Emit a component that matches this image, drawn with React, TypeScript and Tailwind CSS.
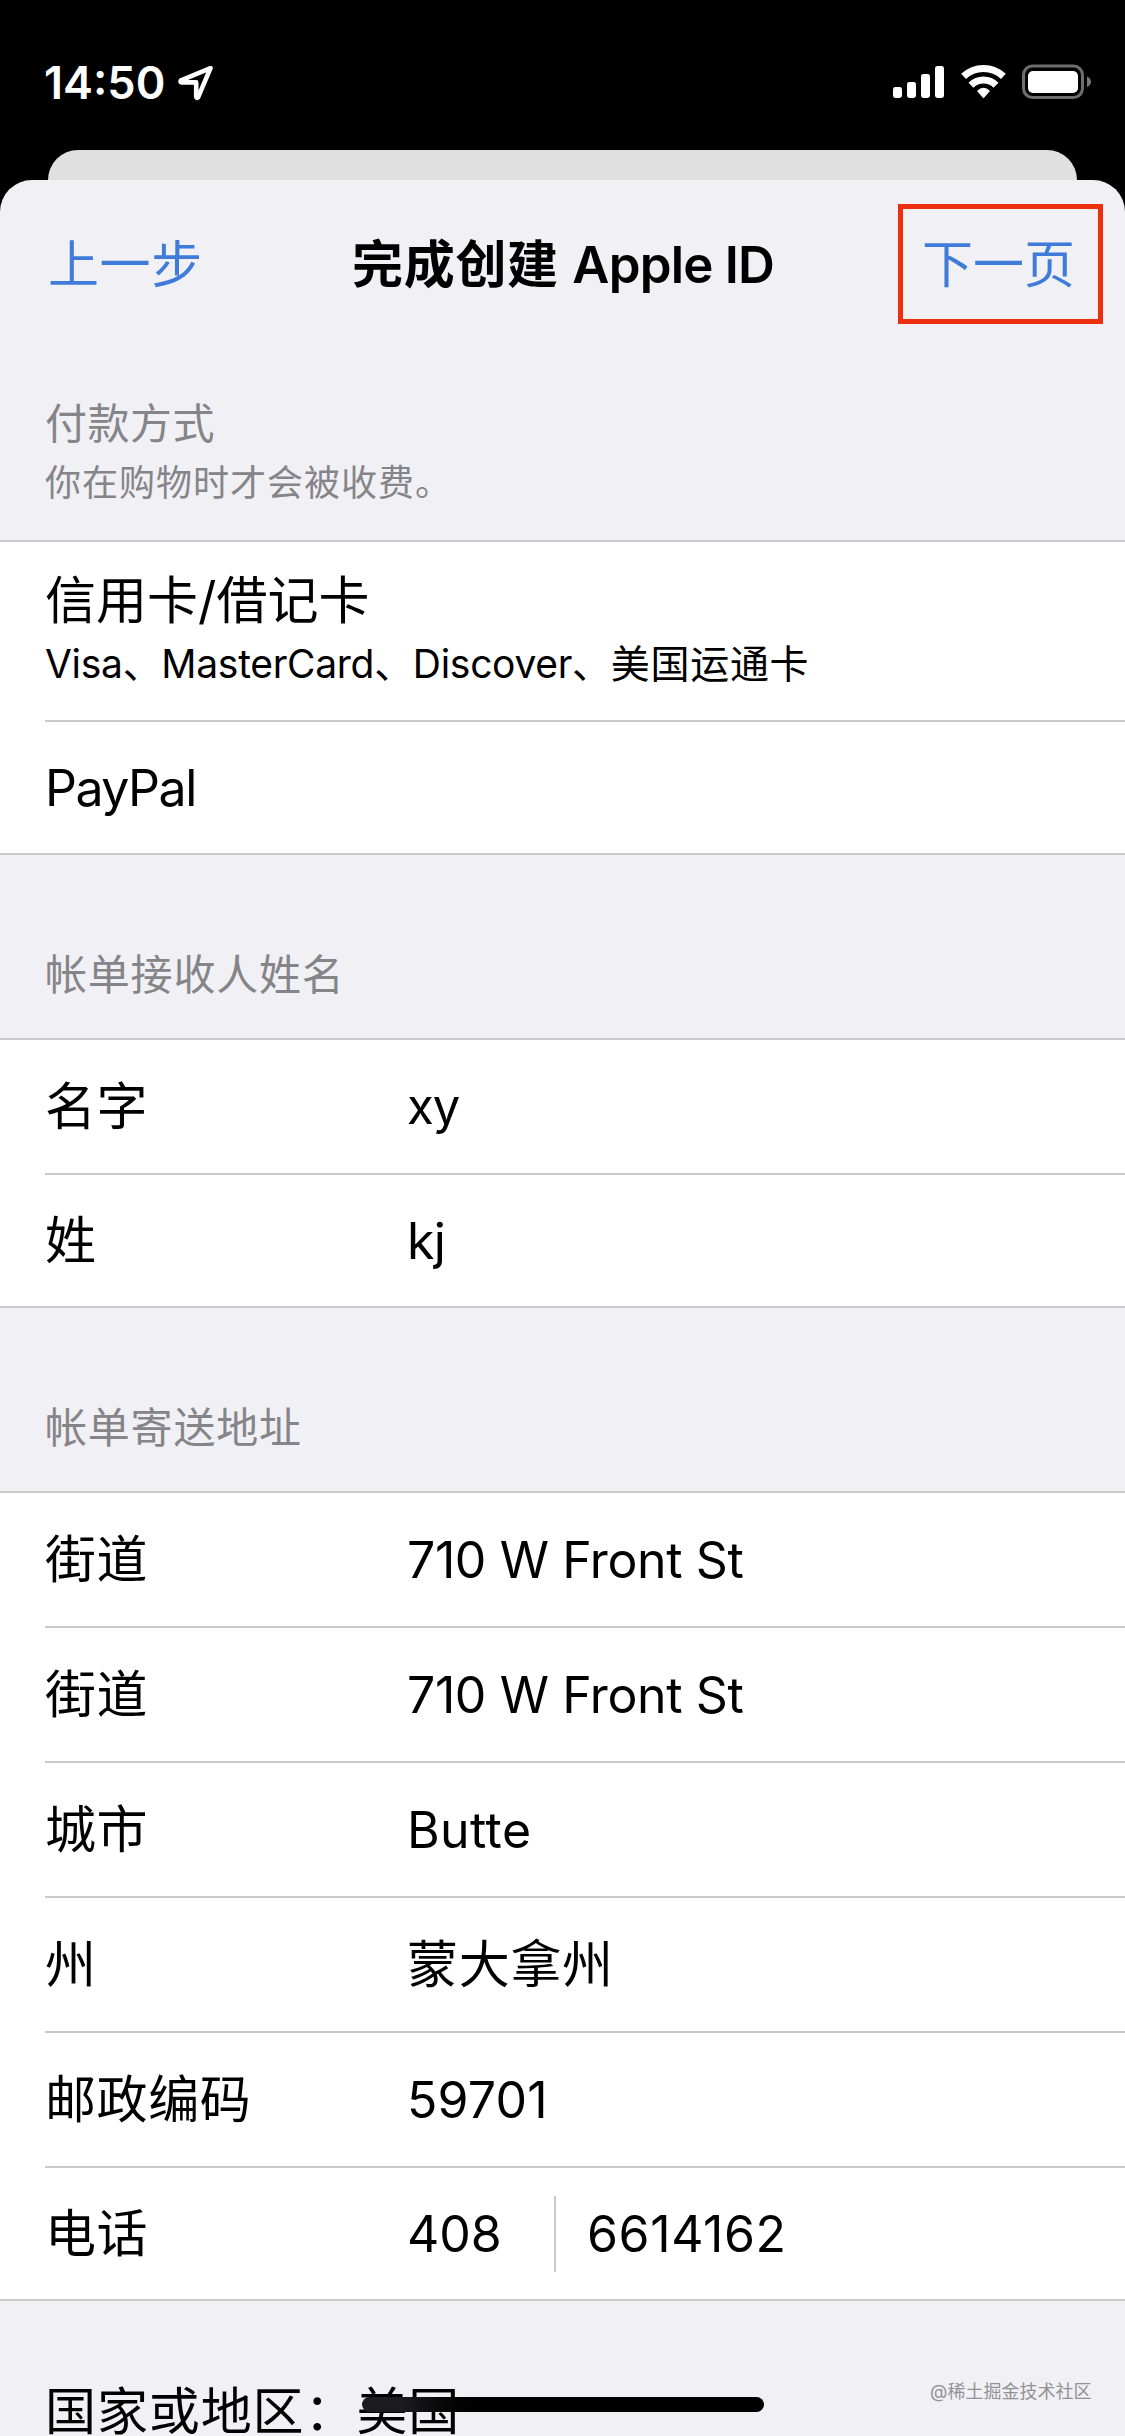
import type { ReactNode } from 'react'

type Field = { label: string; value: string; className: string }

const nameFields: Field[] = [
  { label: '名字', value: 'xy', className: 'text-[49px] tracking-[-1px]' },
  { label: '姓', value: 'kj', className: 'tracking-[-0.8px]' },
]

const addressFields: Field[] = [
  { label: '街道', value: '710 W Front St', className: 'tracking-[-0.4px]' },
  { label: '街道', value: '710 W Front St', className: 'tracking-[-0.4px]' },
  { label: '城市', value: 'Butte', className: 'tracking-[0.4px]' },
  { label: '州', value: '蒙大拿州', className: 'text-[51px] tracking-[0.7px]' },
  { label: '邮政编码', value: '59701', className: 'tracking-[0.2px]' },
]

function StatusBar() {
  return (
    <div className="h-[150px] flex items-start justify-between pl-[44px] pr-[33px] pt-[64px] text-white">
      <div className="flex items-start">
        <span className="w-[134px] pt-px text-[45px] leading-[36px] font-semibold whitespace-nowrap">14:50</span>
        <svg width="36" height="36" viewBox="0 0 36 36" fill="none" stroke="white" strokeWidth="4.6" strokeLinejoin="round" className="mt-px">
          <path d="M32.5 3.2 L3 15.4 Q1.8 17.2 3.6 17.4 H18.2 V32 Q19 33.6 20.2 32.2 Z" />
        </svg>
      </div>
      <div className="flex items-start">
        <svg width="51" height="36" viewBox="0 0 51 36" fill="white">
          <rect x="0" y="23" width="9" height="11" rx="2.4" />
          <rect x="14" y="18" width="9" height="16" rx="2.4" />
          <rect x="28" y="10" width="9" height="24" rx="2.4" />
          <rect x="42" y="2" width="9" height="32" rx="2.4" />
        </svg>
        <svg width="45" height="36" viewBox="0 0 45 36" fill="none" stroke="white" strokeWidth="7" className="ml-[17px]">
          <path d="M2.6 12.4 A29 29 0 0 1 42.4 12.4" />
          <path d="M10 21.2 A17.6 17.6 0 0 1 35 21.2" />
          <path d="M16 27 Q22.5 20.4 29 27 L23.3 33.4 Q22.5 34.4 21.7 33.4 Z" fill="white" stroke="none" />
        </svg>
        <svg width="70" height="36" viewBox="0 0 70 36" className="ml-[16px]">
          <rect x="1.5" y="2" width="59" height="31.5" rx="9" fill="none" stroke="#6e6e6e" strokeWidth="3" />
          <rect x="6" y="7" width="50" height="22" rx="5" fill="white" />
          <path d="M65 12.5 Q69 14.5 69 17.8 Q69 21 65 23 Z" fill="#7a7a7a" />
        </svg>
      </div>
    </div>
  )
}

function Group({ children }: { children: ReactNode }) {
  return <div className="bg-white border-y-2 border-[#c9c9cc]">{children}</div>
}

function Row({ label, children, last }: { label: string; children: ReactNode; last?: boolean }) {
  return (
    <div className={`ml-[45px] flex items-center text-[50px] leading-[60px] ${last ? 'h-[131px]' : 'h-[135px] border-b-2 border-[#c9c9cc]'}`}>
      <span className="w-[362px] text-[51px] tracking-[0.6px]">{label}</span>
      {children}
    </div>
  )
}

export default function App() {
  return (
    <main className="relative w-[1125px] h-[2436px] overflow-hidden bg-black text-black font-['Inter','Noto_Sans_CJK_SC',sans-serif]">
      <StatusBar />
      <div className="mx-[48px] h-[30px] rounded-t-[30px] bg-[#e0e0e0]" />
      <div className="h-[2256px] rounded-t-[32px] bg-[#f1f0f5]">
        <header className="h-[168px] flex items-center justify-between pl-[48px] pr-[22px] text-[51px] leading-[60px] text-[#3f7bd9]">
          <button className="w-[205px] pt-[2px] text-left tracking-[0.6px] whitespace-nowrap">上一步</button>
          <h1 className="-ml-[25px] pt-px text-black font-semibold tracking-[0.7px] whitespace-nowrap">
            完成创建 <span className="tracking-[-0.8px]">Apple ID</span>
          </h1>
          <button className="w-[205px] h-[120px] pt-[2px] pr-[4px] border-[5px] border-[#ec2f0c] whitespace-nowrap">下一页</button>
        </header>

        <div className="h-[192px] pl-[45px] pt-[51px] text-[#858589]">
          <p className="text-[42px] leading-[50px] tracking-[0.5px]">付款方式</p>
          <p className="mt-[9px] text-[36px] leading-[50px] tracking-[1px]">你在购物时才会被收费。</p>
        </div>
        <Group>
          <div className="ml-[45px] h-[180px] border-b-2 border-[#c9c9cc] pt-[29px]">
            <p className="text-[51px] leading-[60px]">信用卡/借记卡</p>
            <p className="mt-[8px] text-[39px] leading-[50px] tracking-[-0.3px]">
              Visa、MasterCard、Discover、<span className="tracking-[0.7px]">美国运通卡</span>
            </p>
          </div>
          <div className="h-[131px] ml-[45px] flex items-center text-[50px] leading-[60px] tracking-[-1.5px]">PayPal</div>
        </Group>

        <p className="h-[183px] pl-[45px] pt-[95px] text-[42px] leading-[50px] tracking-[0.8px] text-[#858589]">帐单接收人姓名</p>
        <Group>
          {nameFields.map((f, i) => (
            <Row key={i} label={f.label} last={i === nameFields.length - 1}>
              <span className={f.className}>{f.value}</span>
            </Row>
          ))}
        </Group>

        <p className="h-[183px] pl-[45px] pt-[95px] text-[42px] leading-[50px] tracking-[0.8px] text-[#858589]">帐单寄送地址</p>
        <Group>
          {addressFields.map((f, i) => (
            <Row key={i} label={f.label}>
              <span className={f.className}>{f.value}</span>
            </Row>
          ))}
          <Row label="电话" last>
            <span className="w-[147px]">408</span>
            <span className="h-[76px] w-[2px] bg-[#c9c9cc]" />
            <span className="ml-[31px] tracking-[0.6px]">6614162</span>
          </Row>
        </Group>

        <p className="pl-[45px] pt-[81px] text-[51px] leading-[60px] tracking-[0.9px] whitespace-nowrap">国家或地区：美国</p>
      </div>

      {/* home indicator */}
      <div className="absolute left-[362px] top-[2397px] w-[402px] h-[15px] rounded-full bg-linear-to-r from-[#1c1c1e] from-10% to-black to-35%" />
      <span className="absolute left-[930px] top-[2379px] text-[18px] leading-[26px] text-[#929296] whitespace-nowrap">@稀土掘金技术社区</span>
    </main>
  )
}
